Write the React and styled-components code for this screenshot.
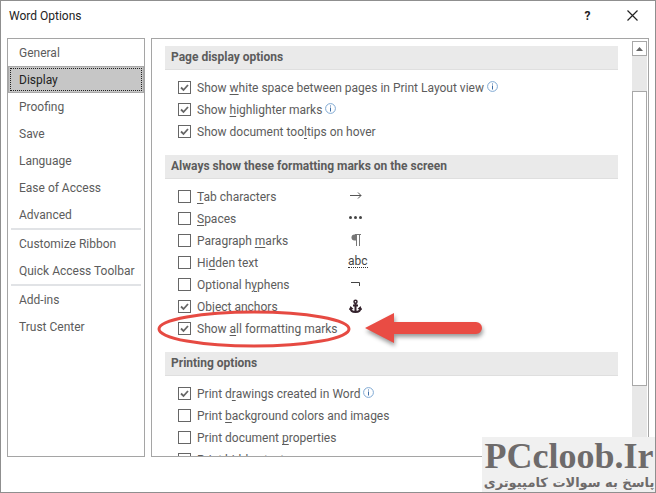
import React, {useState} from "react";
import styled, {createGlobalStyle} from "styled-components";

const navGroups = [
    ["General", "Display", "Proofing", "Save", "Language", "Ease of Access", "Advanced"],
    ["Customize Ribbon", "Quick Access Toolbar"],
    ["Add-ins", "Trust Center"],
];

// an underscore stands before the letter of the access key
const sections = [
    {
        title: "Page display options",
        options: [
            {label: "Show _white space between pages in Print Layout view", checked: true, info: true},
            {label: "Show _highlighter marks", checked: true, info: true},
            {label: "Show document too_ltips on hover", checked: true},
        ],
    },
    {
        title: "Always show these formatting marks on the screen",
        options: [
            {label: "_Tab characters", mark: "tab"},
            {label: "_Spaces", mark: "spaces"},
            {label: "Paragraph _marks", mark: "paragraph"},
            {label: "Hi_dden text", mark: "hidden"},
            {label: "Optional h_yphens", mark: "hyphen"},
            {label: "Ob_ject anchors", mark: "anchor", checked: true},
            {label: "Show _all formatting marks", checked: true, highlight: true},
        ],
    },
    {
        title: "Printing options",
        options: [
            {label: "Print d_rawings created in Word", checked: true, info: true},
            {label: "Print _background colors and images"},
            {label: "Print document _properties"},
            {label: "Print hidden te_xt"},
        ],
    },
];

function InfoIcon() {
    return (
        <InfoSvg viewBox="0 0 11 11" width="11" height="11" aria-hidden="true">
            <circle cx="5.5" cy="5.5" r="4.9" fill="#fff" stroke="#7fa9d3" strokeWidth="1"/>
            <path d="M5 2.5h1v1H5zM5 4.5h1v4H5z" fill="#3f6ea5"/>
        </InfoSvg>
    );
}

function MarkIcon({name}) {
    if (name === "hidden") return <HiddenMark>abc</HiddenMark>;
    if (name === "tab") return (
        <svg width="16" height="16" viewBox="0 0 16 16" aria-hidden="true">
            <path d="M2 6.500h11M10 3.500l3 3-3 3" fill="none" stroke="#555" strokeWidth="1"/>
        </svg>
    );
    if (name === "spaces") return (
        <svg width="16" height="16" viewBox="0 0 16 16" aria-hidden="true">
            <circle cx="2.500" cy="6.500" r="1.500" fill="#444"/>
            <circle cx="7.500" cy="6.500" r="1.500" fill="#444"/>
            <circle cx="12.500" cy="6.500" r="1.500" fill="#444"/>
        </svg>
    );
    if (name === "paragraph") return (
        <svg width="16" height="16" viewBox="0 0 16 16" aria-hidden="true">
            <path d="M8.500 1.500H6.500a3 3 0 0 0 0 6h2z" fill="#777"/>
            <path d="M7 1.500h6M8.500 2v11M11.500 2v11" fill="none" stroke="#777" strokeWidth="1"/>
        </svg>
    );
    if (name === "hyphen") return (
        <svg width="16" height="16" viewBox="0 0 16 16" aria-hidden="true">
            <path d="M3 5.500h8.500V9" fill="none" stroke="#444" strokeWidth="1"/>
        </svg>
    );
    return (
        <svg width="16" height="16" viewBox="0 0 16 16" aria-hidden="true">
            <circle cx="7.500" cy="2.700" r="1.500" fill="none" stroke="#33222c" strokeWidth="1.500"/>
            <path d="M7.500 4v9M5 6.500h5M2.500 9c0 2.500 2 4 5 4s5-1.500 5-4" fill="none" stroke="#33222c" strokeWidth="2"/>
            <path d="M1 11l1.500-4L5.500 10zM14 11l-1.500-4-3 3z" fill="#33222c"/>
        </svg>
    );
}

function Option({label, checked, info, mark, highlight}) {
    const [before, after] = label.split("_");

    return (
        <OptionRow>
            <OptionLabel>
                <Checkbox type="checkbox" defaultChecked={checked}/>
                <span>{before}<u>{after[0]}</u>{after.slice(1)}</span>
            </OptionLabel>
            {info ? <InfoIcon/> : null}
            {mark ? <Mark><MarkIcon name={mark}/></Mark> : null}
            {highlight ?
                <Callout viewBox="0 0 330 44" width="330" height="44" aria-hidden="true">
                    <ellipse cx="97" cy="22" rx="95" ry="17" fill="none" stroke="#e64a42" strokeWidth="3"/>
                    <path
                        d="M208 21L237 6v9h82a6 6 0 0 1 0 12h-82v9z"
                        fill="#e94c44"
                    />
                </Callout>
                : null}
        </OptionRow>
    );
}

export default function App() {
    const [selected, setSelected] = useState("Display");

    return (
        <>
            <GlobalStyle/>
            <Dialog>
                <TitleBar>
                    <h1>Word Options</h1>
                    <TitleButton aria-label="Help"><b>?</b></TitleButton>
                    <TitleButton aria-label="Close">
                        <svg width="11" height="11" viewBox="0 0 11 11" aria-hidden="true">
                            <path d="M.5.5l10 10M10.500.5l-10 10" stroke="#222" strokeWidth="1.200"/>
                        </svg>
                    </TitleButton>
                </TitleBar>
                <Main>
                    <Nav>
                        {navGroups.map((group) => (
                            <NavGroup key={group[0]}>
                                {group.map((item) => (
                                    <NavItem
                                        key={item}
                                        $selected={item === selected}
                                        onClick={() => setSelected(item)}
                                    >
                                        <span>{item}</span>
                                    </NavItem>
                                ))}
                            </NavGroup>
                        ))}
                    </Nav>
                    <Panel>
                        <Content>
                            {sections.map((section) => (
                                <Section key={section.title}>
                                    <h2>{section.title}</h2>
                                    {section.options.map((option) => (
                                        <Option key={option.label} {...option}/>
                                    ))}
                                </Section>
                            ))}
                        </Content>
                        <ScrollBar>
                            <ScrollButton aria-label="Scroll up">
                                <svg width="7" height="4" viewBox="0 0 7 4" aria-hidden="true">
                                    <path d="M0 4L3.500 0 7 4z" fill="#666"/>
                                </svg>
                            </ScrollButton>
                            <ScrollThumb/>
                        </ScrollBar>
                    </Panel>
                </Main>
                <Watermark>
                    <strong>PCcloob.Ir</strong>
                    <span dir="rtl" lang="fa">پاسخ به سوالات کامپیوتری</span>
                </Watermark>
            </Dialog>
        </>
    );
}

const GlobalStyle = createGlobalStyle`
  * {
    box-sizing: border-box;
  }
  body {
    margin: 0;
    background: #fff;
    color: #5c5c5c;
    font: 12px/16px Roboto, "Noto Sans", sans-serif;
  }
  button {
    padding: 0;
    border: none;
    background: none;
    color: inherit;
    font: inherit;
  }
`;

const Dialog = styled.div`
  position: relative;
  display: flex;
  flex-direction: column;
  height: 100vh;
  padding-bottom: 35px;
  border: 1px solid #8f8f8f;
  overflow: hidden;
`;

const TitleBar = styled.header`
  display: flex;
  align-items: center;
  height: 37px;
  flex: none;
  padding: 0 0 8px 8px;
  color: #222;
  h1 {
    flex: 1;
    margin: 0;
    font-size: 12px;
    font-weight: 400;
  }
`;

const TitleButton = styled.button`
  display: flex;
  align-items: center;
  justify-content: center;
  width: 45px;
  height: 28px;
`;

const Main = styled.main`
  display: flex;
  gap: 6px;
  flex: 1;
  min-height: 0;
  padding: 0 6px;
`;

const Nav = styled.nav`
  width: 138px;
  flex: none;
  border: 1px solid #a5a5a5;
`;

const NavGroup = styled.div`
  & + &::before {
    content: "";
    display: block;
    height: 2px;
    margin: 0 3px;
    background: #e1e3e6;
  }
`;

const NavItem = styled.button`
  display: block;
  width: 100%;
  height: 27px;
  padding: 1px;
  text-align: left;
  white-space: nowrap;
  color: ${({$selected}) => $selected ? "#222" : "inherit"};
  background: ${({$selected}) => $selected ? "#c6c6c6" : "none"};
  border: ${({$selected}) => $selected ? "1px solid #a8a8a8" : "1px solid transparent"};
  span {
    display: block;
    height: 100%;
    padding: 3px 8px;
    border: 1px dotted ${({$selected}) => $selected ? "#222" : "transparent"};
  }
`;

const Panel = styled.div`
  display: flex;
  gap: 14px;
  flex: 1;
  min-width: 0;
  padding-right: 1px;
  border: 1px solid #a5a5a5;
`;

const Content = styled.div`
  flex: 1;
  min-width: 0;
  padding: 7px 0 0 13px;
  overflow: hidden;
`;

const Section = styled.section`
  margin-bottom: 12px;
  h2 {
    height: 24px;
    margin: 0 0 7px;
    padding: 3px 6px;
    border-bottom: 1px solid #dfdfdf;
    background: #eaeaea;
    font-size: 12px;
    font-weight: 700;
    line-height: 16px;
  }
`;

const OptionRow = styled.div`
  position: relative;
  display: flex;
  align-items: center;
  gap: 3px;
  height: 22px;
  padding-left: 13px;
`;

const OptionLabel = styled.label`
  display: flex;
  align-items: center;
  gap: 6px;
  white-space: nowrap;
  u {
    text-underline-offset: 2px;
  }
`;

const Checkbox = styled.input`
  appearance: none;
  width: 13px;
  height: 13px;
  margin: 0 0 1px;
  border: 1px solid #666;
  background: #fff;
  &:checked {
    background: #fff url("data:image/svg+xml,%3Csvg xmlns='http://www.w3.org/2000/svg' viewBox='0 0 11 11'%3E%3Cpath d='M2 5.500l2.500 2.500L9 3' fill='none' stroke='%23666' stroke-width='1.800'/%3E%3C/svg%3E");
  }
`;

const InfoSvg = styled.svg`
  flex: none;
  margin-bottom: 3px;
`;

const Mark = styled.span`
  position: absolute;
  left: 183px;
  display: flex;
  height: 16px;
`;

const HiddenMark = styled.span`
  height: 13px;
  border-bottom: 1px dotted #333;
  color: #444;
  line-height: 12px;
`;

const Callout = styled.svg`
  position: absolute;
  left: -8px;
  z-index: 1;
  pointer-events: none;
  path {
    filter: drop-shadow(1px 3px 2px #0006);
  }
`;

const ScrollBar = styled.div`
  display: flex;
  flex-direction: column;
  width: 15px;
  margin-top: 2px;
  background: #e8e8e8;
`;

const ScrollButton = styled.button`
  display: flex;
  align-items: center;
  justify-content: center;
  height: 15px;
  border: 1px solid #a8a8a8;
  background: #fff;
`;

const ScrollThumb = styled.div`
  height: 71%;
  margin-top: 35px;
  border: 1px solid #a8a8a8;
  background: #fff;
`;

const Watermark = styled.div`
  position: absolute;
  right: -1px;
  bottom: -1px;
  z-index: 2;
  display: flex;
  flex-direction: column;
  align-items: center;
  width: 174px;
  height: 56px;
  padding-top: 1px;
  background: #f0f0f0;
  color: #6e6b6b;
  white-space: nowrap;
  strong {
    font: 700 36px/36px "Liberation Serif", serif;
  }
  span {
    font: 700 13px/18px "DejaVu Sans", sans-serif;
  }
`;
